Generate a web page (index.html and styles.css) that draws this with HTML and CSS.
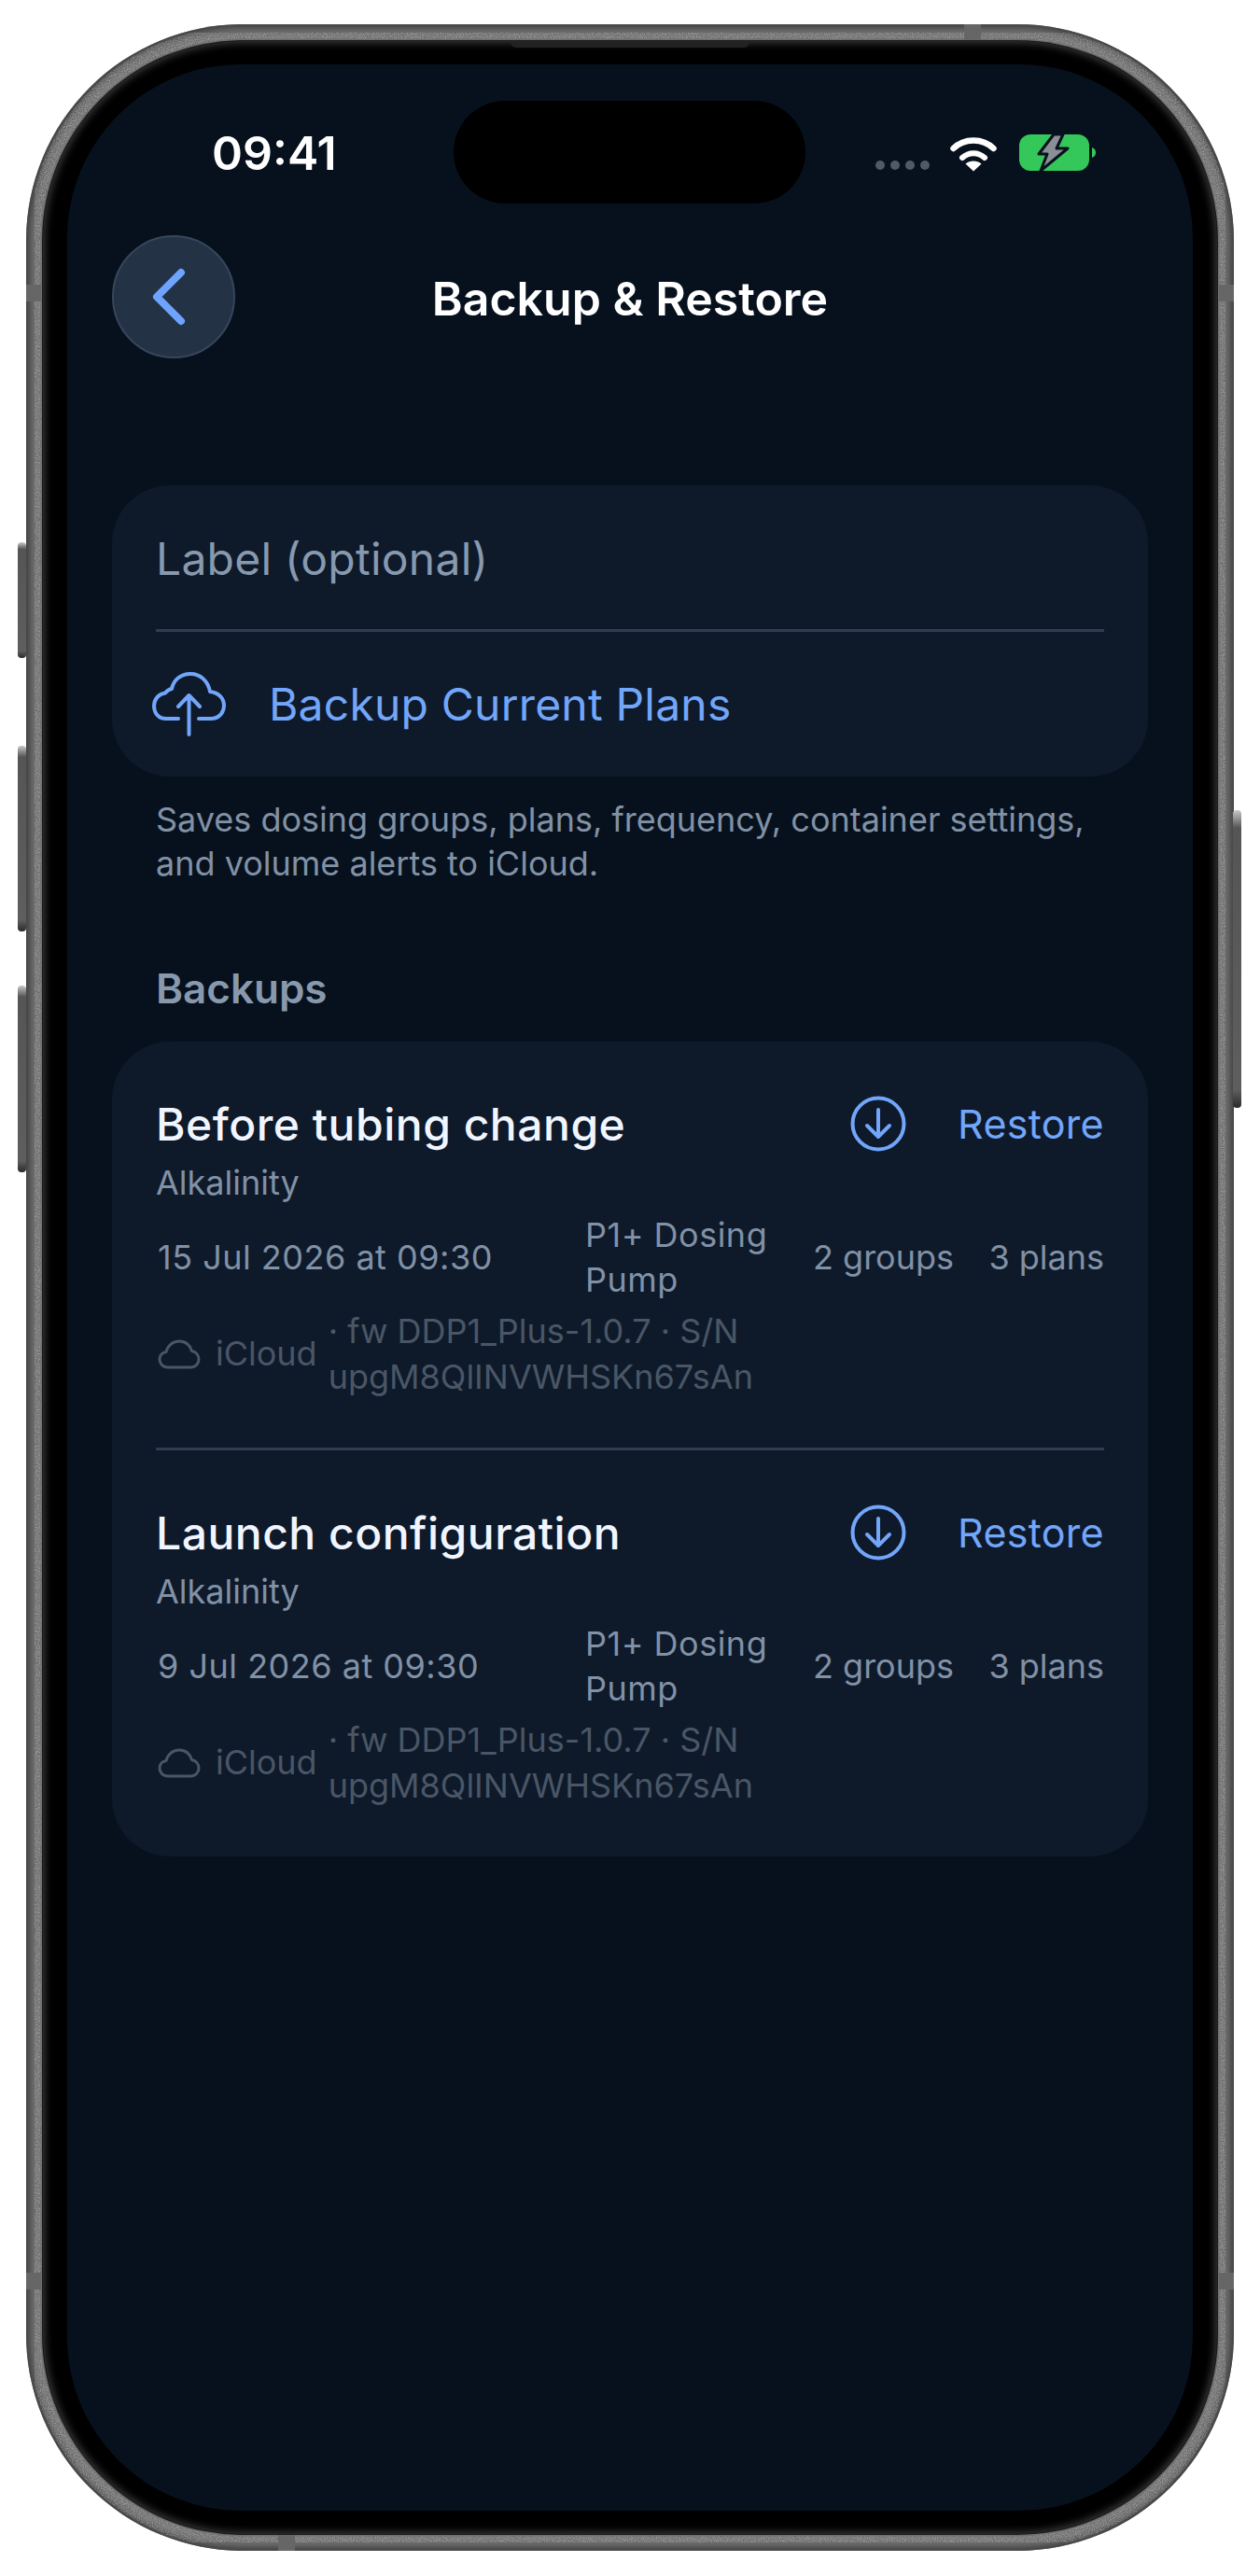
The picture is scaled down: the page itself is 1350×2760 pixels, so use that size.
FILE: index.html
```html
<!DOCTYPE html>
<html>
<head>
    <title>Backup &amp; Restore</title>
    <link rel="stylesheet" href="styles.css">
</head>
<body>
    <div id="phone">
        <span class="side-btn btn-action"></span>
        <span class="side-btn btn-vol-up"></span>
        <span class="side-btn btn-vol-down"></span>
        <span class="side-btn btn-power"></span>

        <div id="bezel">
            <span id="speaker"></span>
            <div id="screen">
                <span id="island"></span>

                <div id="status-bar">
                    <span id="clock">09:41</span>
                    <div id="status-icons">
                        <div id="signal-dots"><i></i><i></i><i></i><i></i></div>
                        <svg class="wifi-icon" width="50" height="38" viewBox="0 0 50 38">
                            <path d="M3.5 13C15 1.500 35 1.500 46.500 13" fill="none" stroke="#fff" stroke-width="6.500" stroke-linecap="round"/>
                            <path d="M13 23C20 16.500 30 16.500 37 23" fill="none" stroke="#fff" stroke-width="6" stroke-linecap="round"/>
                            <path d="M25 37.500L16.500 29.500C21 25.500 29 25.500 33.500 29.500Z" fill="#fff"/>
                        </svg>
                        <svg class="battery-icon" width="83" height="41" viewBox="0 0 83 41">
                            <rect x="0" y="1" width="75" height="39" rx="12" fill="#34c759"/>
                            <path d="M78 15C81 16 82 18 82 20.500C82 23 81 25 78 26Z" fill="#34c759"/>
                            <path d="M37 1L21 22H30L23 40L52 16H40L47 1Z" fill="#8a8e95" stroke="#07111e" stroke-width="3" stroke-linejoin="round"/>
                        </svg>
                    </div>
                </div>

                <div id="nav">
                    <button class="back-btn">
                        <svg width="40" height="64" viewBox="0 0 40 64">
                            <path d="M33 6L7 32L33 58" fill="none" stroke="#6ea4ff" stroke-width="8" stroke-linecap="round" stroke-linejoin="round"/>
                        </svg>
                    </button>
                    <h1 class="nav-title">Backup &amp; Restore</h1>
                </div>

                <div class="card new-backup">
                    <div class="label-field">Label (optional)</div>
                    <div class="backup-action">
                        <svg class="cloud-up" width="80" height="70" viewBox="0 0 80 70">
                            <path d="M28 50H15C7 50 2 44 2 36.500C2 29 7 23.500 14 22.500C16 20 18 18.500 21 18C23 8 31 2 41 2C52 2 60 10 62 21C71 22 77 28 77 36C77 44 71 50 63 50H50" fill="none" stroke="#72a6fb" stroke-width="4" stroke-linecap="round" stroke-linejoin="round"/>
                            <path d="M39.500 67V25M28 37L39.500 25L51 37" fill="none" stroke="#72a6fb" stroke-width="4" stroke-linecap="round" stroke-linejoin="round"/>
                        </svg>
                        <span>Backup Current Plans</span>
                    </div>
                </div>
                <p class="hint">Saves dosing groups, plans, frequency, container settings,<br>and volume alerts to iCloud.</p>

                <h2 class="section-title">Backups</h2>

                <div class="card backups">
                    <div class="backup-row">
                        <div class="row-head">
                            <span class="backup-name">Before tubing change</span>
                            <svg class="restore-icon" width="60" height="60" viewBox="0 0 60 60">
                                <circle cx="30" cy="30" r="27.500" fill="none" stroke="#72a6fb" stroke-width="4"/>
                                <path d="M30 15V43M18 32L30 44L42 32" fill="none" stroke="#72a6fb" stroke-width="4" stroke-linecap="round" stroke-linejoin="round"/>
                            </svg>
                            <span class="restore-text">Restore</span>
                        </div>
                        <div class="backup-group">Alkalinity</div>
                        <div class="meta">
                            <span class="meta-date">15 Jul 2026 at 09:30</span>
                            <span class="meta-pump">P1+ Dosing Pump</span>
                            <span>2 groups</span>
                            <span class="meta-plans">3 plans</span>
                        </div>
                        <div class="source">
                            <svg class="cloud-small" width="46" height="32" viewBox="0 0 46 32">
                                <path d="M11 30C5.500 30 2 26 2 21.500C2 17 5 14 9 13.500C10.500 7 16 2 23 2C30 2 35 6.500 36.500 12.500C41 13.500 44 17 44 21.500C44 26 40.500 30 35 30Z" fill="none" stroke="#4a5666" stroke-width="3" stroke-linejoin="round"/>
                            </svg>
                            <span class="source-name">iCloud</span>
                            <span class="source-info">· fw DDP1_Plus-1.0.7 · S/N upgM8QlINVWHSKn67sAn</span>
                        </div>
                    </div>
                    <div class="backup-row">
                        <div class="row-head">
                            <span class="backup-name">Launch configuration</span>
                            <svg class="restore-icon" width="60" height="60" viewBox="0 0 60 60">
                                <circle cx="30" cy="30" r="27.500" fill="none" stroke="#72a6fb" stroke-width="4"/>
                                <path d="M30 15V43M18 32L30 44L42 32" fill="none" stroke="#72a6fb" stroke-width="4" stroke-linecap="round" stroke-linejoin="round"/>
                            </svg>
                            <span class="restore-text">Restore</span>
                        </div>
                        <div class="backup-group">Alkalinity</div>
                        <div class="meta">
                            <span class="meta-date">9 Jul 2026 at 09:30</span>
                            <span class="meta-pump">P1+ Dosing Pump</span>
                            <span>2 groups</span>
                            <span class="meta-plans">3 plans</span>
                        </div>
                        <div class="source">
                            <svg class="cloud-small" width="46" height="32" viewBox="0 0 46 32">
                                <path d="M11 30C5.500 30 2 26 2 21.500C2 17 5 14 9 13.500C10.500 7 16 2 23 2C30 2 35 6.500 36.500 12.500C41 13.500 44 17 44 21.500C44 26 40.500 30 35 30Z" fill="none" stroke="#4a5666" stroke-width="3" stroke-linejoin="round"/>
                            </svg>
                            <span class="source-name">iCloud</span>
                            <span class="source-info">· fw DDP1_Plus-1.0.7 · S/N upgM8QlINVWHSKn67sAn</span>
                        </div>
                    </div>
                </div>
            </div>
        </div>

        <!-- brushed metal on the rim, antenna bands on top of it -->
        <svg id="rim-grain" width="1294" height="2707" viewBox="0 0 1294 2707">
            <filter id="grain" x="0" y="0" width="100%" height="100%">
                <feTurbulence type="fractalNoise" baseFrequency="0.85" numOctaves="2" seed="4"/>
                <feColorMatrix type="matrix" values="0 0 0 0 1  0 0 0 0 1  0 0 0 0 1  1.6 0 0 0 -0.55"/>
                <feComposite in2="SourceAlpha" operator="in"/>
            </filter>
            <rect x="9" y="9" width="1276" height="2689" rx="223" fill="none" stroke="#fff" stroke-width="13" filter="url(#grain)"/>
        </svg>
        <span class="band band-top"></span>
        <span class="band band-bottom"></span>
        <span class="band band-left-top"></span>
        <span class="band band-left-bottom"></span>
        <span class="band band-right-top"></span>
        <span class="band band-right-bottom"></span>
    </div>
</body>
</html>
```

FILE: styles.css
```css
* {
    box-sizing: border-box;
}

body {
    margin: 0;
    padding: 26px 28px 27px;
    background-color: #fff;
    font-family: Inter, "Liberation Sans", sans-serif;
}

#phone {
    position: relative;
    height: 2707px;
    padding: 18px;
    border-radius: 232px;
    background-color: #6e6e6e;
    box-shadow: inset 0 0 6px 4px #404040;
}

#rim-grain {
    position: absolute;
    top: 0;
    left: 0;
    opacity: 0.45;
}

#bezel {
    position: relative;
    height: 100%;
    padding: 25px 26px;
    border-radius: 214px;
    background-color: #000;
    box-shadow: 0 0 0 1px #1c1c1c, inset 0 0 9px 2px #3c3c3c;
}

#screen {
    position: relative;
    height: 100%;
    padding: 0 48px;
    border-radius: 186px;
    background-color: #07111d;
    overflow: hidden;
}

.side-btn {
    position: absolute;
    width: 9px;
    border-radius: 4px;
    background: linear-gradient(to bottom, #c8c8c8 0, #555 6%, #5e5e5e 94%, #2a2a2a 100%);
}

.btn-action {
    left: -9px;
    top: 555px;
    height: 124px;
}

.btn-vol-up {
    left: -9px;
    top: 773px;
    height: 199px;
}

.btn-vol-down {
    left: -9px;
    top: 1030px;
    height: 200px;
}

.btn-power {
    right: -8px;
    top: 842px;
    height: 319px;
}

.band {
    position: absolute;
    background-color: #666;
}

.band-top,
.band-bottom {
    width: 18px;
    height: 17px;
}

.band-top {
    top: 0;
    right: 271px;
}

.band-bottom {
    bottom: 0;
    left: 270px;
}

.band-left-top,
.band-left-bottom,
.band-right-top,
.band-right-bottom {
    width: 16px;
    height: 18px;
}

.band-left-top {
    left: 0;
    top: 279px;
}

.band-left-bottom {
    left: 0;
    top: 2409px;
}

.band-right-top {
    right: 0;
    top: 279px;
}

.band-right-bottom {
    right: 0;
    top: 2409px;
}

#speaker {
    position: absolute;
    top: 1px;
    left: 501px;
    width: 256px;
    height: 6px;
    border-radius: 0 0 6px 6px;
    background-color: #222;
}

#island {
    position: absolute;
    top: 39px;
    left: 414px;
    width: 377px;
    height: 110px;
    border-radius: 55px;
    background-color: #000;
}

#status-bar {
    display: flex;
    justify-content: space-between;
    height: 115px;
    padding: 0 55px 0 107px;
    margin-bottom: 68px;
    align-items: flex-end;
}

#clock {
    color: #fff;
    font-size: 50px;
    font-weight: 600;
    line-height: 40px;
}

#status-icons {
    display: flex;
    align-items: flex-end;
    gap: 22px;
}

#signal-dots {
    display: flex;
    gap: 6px;
    padding-bottom: 2px;
}

#signal-dots i {
    width: 10px;
    height: 10px;
    border-radius: 50%;
    background-color: #4f5a68;
}

.wifi-icon {
    display: block;
    margin-right: 2px;
}

.battery-icon {
    display: block;
}

#nav {
    position: relative;
    display: flex;
    align-items: center;
    justify-content: center;
    height: 132px;
}

.back-btn {
    position: absolute;
    left: 0;
    top: 0;
    display: flex;
    align-items: center;
    justify-content: center;
    width: 132px;
    height: 132px;
    padding: 0 10px 0 0;
    border: 2px solid #36465c;
    border-radius: 50%;
    background-color: #243246;
}

.nav-title {
    margin: 0;
    padding-top: 3px;
    color: #fff;
    font-size: 50px;
    font-weight: 600;
}

.card {
    border-radius: 62px;
    background-color: #0e1a2a;
}

.new-backup {
    margin-top: 136px;
    height: 312px;
    padding: 0 47px;
}

.label-field {
    display: flex;
    align-items: center;
    height: 157px;
    padding-top: 3px;
    border-bottom: 3px solid #313d4e;
    color: #8899ae;
    font-size: 48px;
    letter-spacing: 0.25px;
}

.backup-action {
    display: flex;
    align-items: center;
    gap: 45px;
    height: 155px;
    margin-left: -4px;
    color: #72a6fb;
    font-size: 48px;
    letter-spacing: 0.2px;
}

.hint {
    margin: 23px 47px 0;
    color: #8191a6;
    font-size: 36px;
    line-height: 47px;
}

.section-title {
    margin: 85px 47px 32px;
    color: #8899ae;
    font-size: 44px;
    font-weight: 600;
    line-height: 50px;
}

.backups {
    height: 873px;
    padding: 0 47px;
}

.backup-row {
    padding: 58px 0 52px;
    border-bottom: 3px solid #313d4e;
}

.backup-row:last-child {
    padding-top: 58px;
    border-bottom: 0;
}

.row-head {
    display: flex;
    align-items: center;
    height: 60px;
}

.backup-name {
    flex: 1;
    color: #f0f5ff;
    font-size: 48px;
    font-weight: 500;
    letter-spacing: 0.5px;
}

.restore-icon {
    display: block;
    margin-right: 55px;
}

.restore-text {
    color: #72a6fb;
    font-size: 43px;
    letter-spacing: 0.3px;
}

.backup-group {
    margin-top: 11px;
    color: #8191a6;
    font-size: 36px;
    line-height: 44px;
}

.meta {
    display: flex;
    align-items: center;
    margin-top: 10px;
    color: #8191a6;
    font-size: 36px;
    line-height: 48px;
}

.meta-date {
    width: 460px;
    padding-left: 2px;
    letter-spacing: 0.5px;
}

.meta-pump {
    width: 244px;
    padding-right: 20px;
    letter-spacing: 0.5px;
}

.meta-plans {
    margin-left: auto;
}

.source {
    display: flex;
    align-items: center;
    margin-top: 7px;
    padding-left: 2px;
    color: #4a5666;
    font-size: 36px;
    line-height: 48.500px;
}

.cloud-small {
    display: block;
    margin-right: 16px;
}

.source-name {
    margin-right: 12px;
}

.source-info {
    width: 480px;
}
```
